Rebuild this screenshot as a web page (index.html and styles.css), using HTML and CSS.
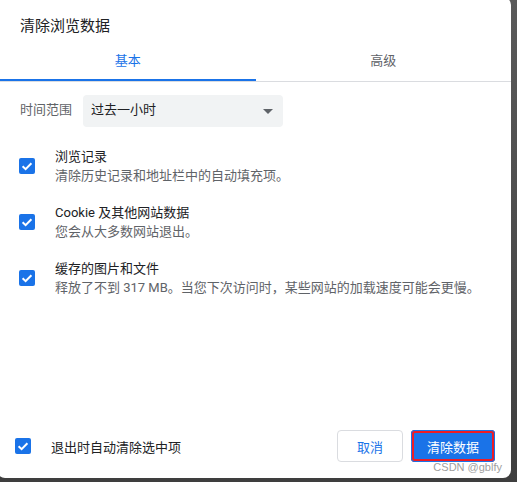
FILE: index.html
```html
<!DOCTYPE html>
<html lang="zh-CN">
<head>
<meta charset="utf-8">
<title>清除浏览数据</title>
<link rel="stylesheet" href="styles.css">
</head>
<body>
<div class="dialog">
  <div class="title">清除浏览数据</div>
  <div class="tabs">
    <div class="tab active">基本</div>
    <div class="tab">高级</div>
  </div>
  <div class="range">
    <span class="range-label">时间范围</span>
    <div class="select"><span>过去一小时</span><span class="arrow"></span></div>
  </div>
  <div class="items">
    <div class="item">
      <span class="checkbox"><svg viewBox="0 0 16 16" width="16" height="16"><path d="M3.6 8.3 L6.6 11.2 L12.4 5.2" fill="none" stroke="#fff" stroke-width="2"/></svg></span>
      <div class="item-text"><div class="item-main">浏览记录</div><div class="item-sub">清除历史记录和地址栏中的自动填充项。</div></div>
    </div>
    <div class="item">
      <span class="checkbox"><svg viewBox="0 0 16 16" width="16" height="16"><path d="M3.6 8.3 L6.6 11.2 L12.4 5.2" fill="none" stroke="#fff" stroke-width="2"/></svg></span>
      <div class="item-text"><div class="item-main">Cookie 及其他网站数据</div><div class="item-sub">您会从大多数网站退出。</div></div>
    </div>
    <div class="item">
      <span class="checkbox"><svg viewBox="0 0 16 16" width="16" height="16"><path d="M3.6 8.3 L6.6 11.2 L12.4 5.2" fill="none" stroke="#fff" stroke-width="2"/></svg></span>
      <div class="item-text"><div class="item-main">缓存的图片和文件</div><div class="item-sub">释放了不到 317 MB。当您下次访问时，某些网站的加载速度可能会更慢。</div></div>
    </div>
  </div>
  <div class="footer">
    <div class="exit">
      <span class="checkbox"><svg viewBox="0 0 16 16" width="16" height="16"><path d="M3.6 8.3 L6.6 11.2 L12.4 5.2" fill="none" stroke="#fff" stroke-width="2"/></svg></span>
      <span class="exit-label">退出时自动清除选中项</span>
    </div>
    <div class="buttons">
      <button class="btn cancel">取消</button>
      <button class="btn primary">清除数据</button>
    </div>
  </div>
  <div class="watermark">CSDN @gblfy</div>
</div>
</body>
</html>
```
FILE: styles.css
```css
html, body {
  margin: 0;
  height: 482px;
  overflow: hidden;
}
body {
  background: linear-gradient(#5a5a5a, #3e3e3e);
  font-family: Roboto, "Noto Sans CJK SC", sans-serif;
  font-size: 13px;
  color: #202124;
}
.dialog {
  position: relative;
  box-sizing: border-box;
  margin: -3px 0 0 -3px;
  width: 514px;
  height: 481px;
  padding: 3px 0 0 3px;
  background: #fff;
  border-radius: 8px;
  display: flex;
  flex-direction: column;
}
.title {
  padding: 16px 20px 0;
  font-size: 15px;
  line-height: 20px;
  color: #202124;
}
.tabs {
  margin-top: 5px;
  display: grid;
  grid-template-columns: 1fr 1fr;
  border-bottom: 1px solid #dadce0;
}
.tab {
  height: 40px;
  line-height: 40px;
  text-align: center;
  color: #5f6368;
  font-size: 13px;
}
.tab.active {
  color: #1a73e8;
  box-shadow: inset 0 -2px 0 #1a73e8;
}
.range {
  margin-top: 13px;
  padding-left: 20px;
  display: flex;
  align-items: center;
  gap: 11px;
  line-height: 18px;
}
.range-label {
  color: #5f6368;
  padding-bottom: 2px;
}
.select {
  box-sizing: border-box;
  width: 200px;
  height: 32px;
  padding: 0 10px 2px 8px;
  background: #f1f3f4;
  border-radius: 4px;
  display: flex;
  align-items: center;
  justify-content: space-between;
  color: #202124;
}
.arrow {
  width: 0;
  height: 0;
  margin-top: 2px;
  border-left: 5px solid transparent;
  border-right: 5px solid transparent;
  border-top: 5px solid #5f6368;
}
.items {
  margin-top: 20px;
  display: flex;
  flex-direction: column;
  gap: 18px;
}
.item {
  display: flex;
  align-items: center;
  gap: 20px;
  padding-left: 19px;
}
.item-text {
  line-height: 19px;
}
.item-sub {
  color: #5f6368;
}
.checkbox {
  flex: none;
  width: 16px;
  height: 16px;
  border-radius: 2px;
  background: #1a73e8;
  display: block;
}
.checkbox svg {
  display: block;
}
.footer {
  margin-top: auto;
  padding: 0 16px 16px 15px;
  display: flex;
  align-items: center;
  justify-content: space-between;
}
.exit {
  display: flex;
  align-items: center;
  gap: 20px;
}
.buttons {
  display: flex;
  gap: 8px;
}
.btn {
  box-sizing: border-box;
  height: 32px;
  border-radius: 4px;
  font-family: Roboto, "Noto Sans CJK SC", sans-serif;
  font-size: 13px;
  padding: 0;
}
.cancel {
  width: 66px;
  background: #fff;
  border: 1px solid #dadce0;
  color: #1a73e8;
}
.primary {
  width: 84px;
  border: none;
  background: #1a73e8;
  color: #fff;
  box-shadow: inset 0 0 0 1px #1a73e8, inset 0 0 0 3px #ee1c25;
}
.watermark {
  position: absolute;
  right: 9px;
  bottom: 5px;
  font-family: "Liberation Sans", Arial, sans-serif;
  font-size: 11px;
  color: #a0a0a0;
}
```
